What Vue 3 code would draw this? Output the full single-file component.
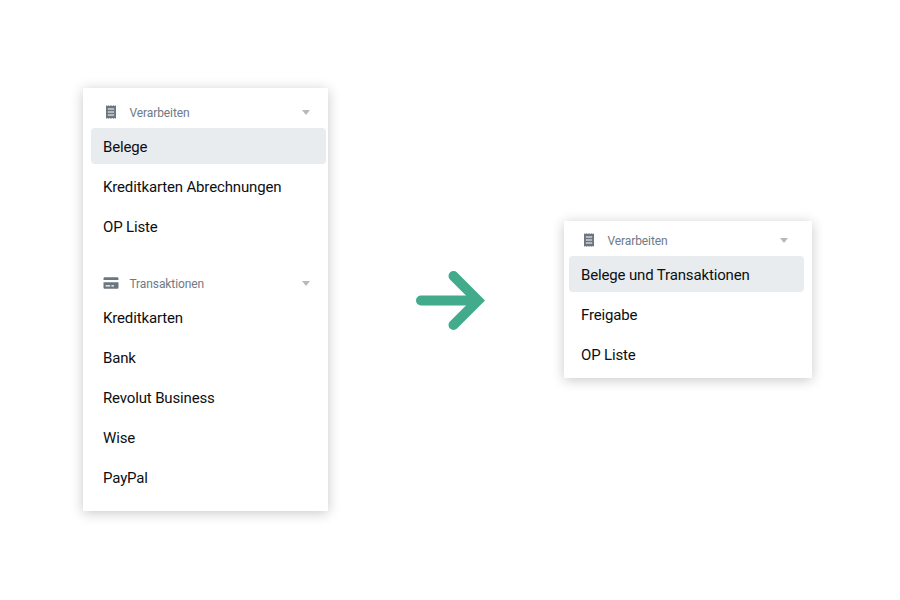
<template>
  <div class="page">
    <div class="menu menu-before">
      <section v-for="group in beforeGroups" :key="group.title" class="group">
        <div class="group-head">
          <svg class="head-icon" width="20" height="20" viewBox="0 0 24 24">
            <path v-if="group.icon === 'receipt'" :d="receiptPath" />
            <path v-else :d="cardPath" />
          </svg>
          <span class="head-title">{{ group.title }}</span>
          <span class="caret"></span>
        </div>
        <a v-for="item in group.items" :key="item" class="item" :class="{ active: item === group.active }">{{ item }}</a>
      </section>
    </div>

    <svg class="arrow" width="69" height="59" viewBox="0 0 69 59">
      <path class="shaft" d="M5 29.500H60" />
      <path class="head" d="M37.500 5L62 29.500L37.500 54" />
    </svg>

    <div class="menu menu-after">
      <section class="group">
        <div class="group-head">
          <svg class="head-icon" width="20" height="20" viewBox="0 0 24 24">
            <path :d="receiptPath" />
          </svg>
          <span class="head-title">Verarbeiten</span>
          <span class="caret"></span>
        </div>
        <a v-for="item in afterItems" :key="item" class="item" :class="{ active: item === 'Belege und Transaktionen' }">{{ item }}</a>
      </section>
    </div>
  </div>
</template>

<script setup>
const receiptPath =
  "M6 4v16l1.500-.8 1.500.8 1.500-.8 1.500.8 1.500-.8 1.500.8 1.500-.8 1.500.8V4l-1.500.8L15 4l-1.500.8L12 4l-1.500.8L9 4l-1.500.8L6 4zm2.200 3.700h7.600v1.400H8.200V7.700zm0 3.600h7.600v1.400H8.200v-1.400zm0 3.600h7.600v1.400H8.200v-1.400z";
const cardPath =
  "M4.500 5h15C20.300 5 21 5.700 21 6.500V8.500H3V6.500C3 5.700 3.700 5 4.500 5zM3 11h18v6.500c0 .8-.7 1.500-1.500 1.500h-15C3.700 19 3 18.300 3 17.500V11zm2.500 3.800v1.500h5.500v-1.500H5.500zm7 0v1.500h3v-1.500h-3z";

const beforeGroups = [
  {
    title: "Verarbeiten",
    icon: "receipt",
    active: "Belege",
    items: ["Belege", "Kreditkarten Abrechnungen", "OP Liste"],
  },
  {
    title: "Transaktionen",
    icon: "card",
    active: "",
    items: ["Kreditkarten", "Bank", "Revolut Business", "Wise", "PayPal"],
  },
];

const afterItems = ["Belege und Transaktionen", "Freigabe", "OP Liste"];
</script>

<style scoped>
.page {
  width: 900px;
  height: 599px;
  box-sizing: border-box;
  padding-left: 83px;
  display: flex;
  align-items: center;
  font-family: Roboto, "Noto Sans", sans-serif;
  background: #fff;
}

.menu {
  background: #fff;
  box-shadow: 0 2px 12px rgba(0, 0, 0, 0.22);
  box-sizing: border-box;
}

.menu-before {
  width: 245px;
  padding: 12px 2px 16px 8px;
}

.menu-after {
  width: 248px;
  padding: 7px 8px 6px 5px;
}

.group + .group {
  margin-top: 27px;
}

.group-head {
  height: 24px;
  padding: 0 16px 0 10px;
  margin-bottom: 4px;
  display: flex;
  align-items: center;
}

.head-icon {
  flex: none;
  fill: #6b7680;
}

.head-title {
  margin-left: 8.500px;
  padding-top: 1px;
  font-size: 12px;
  letter-spacing: -0.1px;
  color: #6f7a85;
}

.caret {
  margin-left: auto;
  width: 0;
  height: 0;
  border-left: 4.500px solid transparent;
  border-right: 4.500px solid transparent;
  border-top: 5px solid #b4bac0;
}

.item {
  display: block;
  height: 36px;
  padding: 0 12px;
  line-height: 38px;
  border-radius: 4px;
  font-size: 15px;
  letter-spacing: -0.15px;
  color: #0c0f12;
}

.item + .item {
  margin-top: 4px;
}

.item.active {
  background: #e9ecef;
}

.arrow {
  flex: none;
  margin: 2px 79px 0 88px;
}

.arrow path {
  fill: none;
  stroke: #41ab8b;
  stroke-width: 10;
}

.shaft {
  stroke-linecap: round;
}

.head {
  stroke-linecap: round;
  stroke-linejoin: miter;
}
</style>
